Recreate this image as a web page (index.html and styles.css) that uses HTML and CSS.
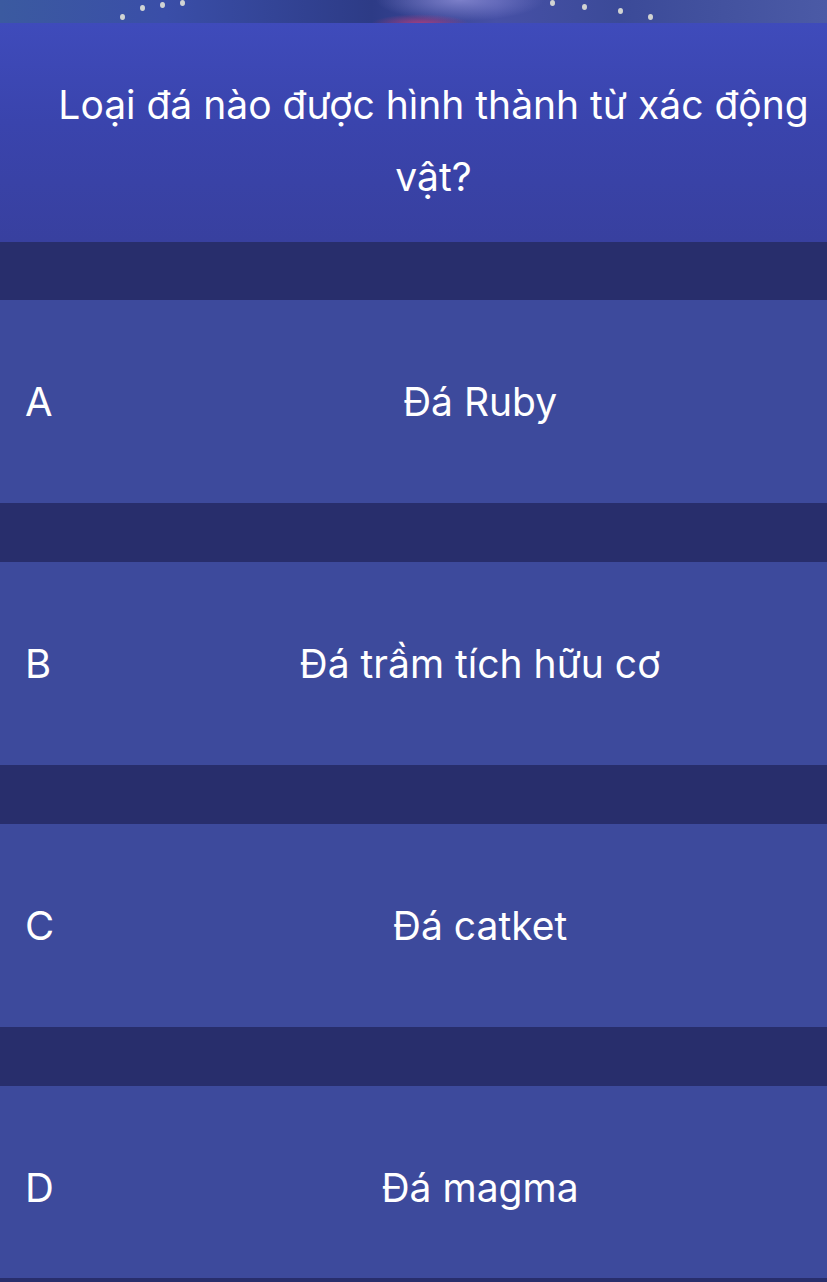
FILE: index.html
```html
<!DOCTYPE html>
<html lang="vi">
<head>
<meta charset="utf-8">
<title>Câu hỏi</title>
<link rel="stylesheet" href="styles.css">
</head>
<body>
<div class="page">
  <div class="banner">
    <span class="star s1"></span><span class="star s2"></span><span class="star s3"></span>
    <span class="star s4"></span><span class="star s5"></span><span class="star s6"></span>
    <span class="star s7"></span><span class="star s8"></span>
  </div>
  <div class="question">
    <p class="question-text">Loại đá nào được hình thành từ xác động vật?</p>
  </div>
  <div class="answers">
    <div class="answer"><span class="letter">A</span><span class="text">Đá Ruby</span></div>
    <div class="answer"><span class="letter">B</span><span class="text">Đá trầm tích hữu cơ</span></div>
    <div class="answer"><span class="letter">C</span><span class="text">Đá catket</span></div>
    <div class="answer"><span class="letter">D</span><span class="text">Đá magma</span></div>
  </div>
</div>
</body>
</html>
```

FILE: styles.css
```css
html, body {
  margin: 0;
  padding: 0;
}
body {
  background: #282e6c;
  font-family: Inter, "Noto Sans", "DejaVu Sans", sans-serif;
  color: #ffffff;
  width: 827px;
  height: 1282px;
  overflow: hidden;
}
.page {
  display: flex;
  flex-direction: column;
}
.banner {
  position: relative;
  height: 23px;
  background:
    radial-gradient(ellipse 70px 14px at 420px 24px, rgba(200, 60, 120, 0.75), transparent 70%),
    radial-gradient(ellipse 120px 30px at 460px 0px, rgba(150, 150, 220, 0.7), transparent 70%),
    linear-gradient(90deg, #3b5aa0 0%, #3a4ea8 20%, #2d3b86 45%, #4650a6 60%, #3b4a98 75%, #4b5aa6 100%);
  overflow: hidden;
}
.star {
  position: absolute;
  width: 5px;
  height: 6px;
  border-radius: 50%;
  background: rgba(235, 235, 220, 0.85);
}
.s1 { left: 120px; top: 14px; }
.s2 { left: 140px; top: 5px; }
.s3 { left: 160px; top: 2px; }
.s4 { left: 180px; top: 0px; }
.s5 { left: 550px; top: 0px; }
.s6 { left: 582px; top: 4px; }
.s7 { left: 618px; top: 8px; }
.s8 { left: 648px; top: 14px; }
.question {
  height: 219px;
  display: flex;
  align-items: center;
  justify-content: center;
  padding: 16px 4px 0 44px;
  box-sizing: border-box;
  background: linear-gradient(180deg, #3f4bbb 0%, #3a44ad 45%, #38409f 100%);
}
.question-text {
  margin: 0;
  text-align: center;
  font-size: 39px;
  line-height: 72px;
  font-weight: 400;
}
.answers {
  display: flex;
  flex-direction: column;
  gap: 59px;
  margin-top: 58px;
}
.answer {
  height: 203px;
  display: flex;
  align-items: center;
  padding-left: 25px;
  box-sizing: border-box;
  background: #3d4a9c;
}
.answer:last-child {
  height: 192px;
  padding-top: 11px;
}
.letter {
  width: 108px;
  font-size: 40px;
}
.text {
  flex: 1;
  text-align: center;
  font-size: 39px;
}
```
